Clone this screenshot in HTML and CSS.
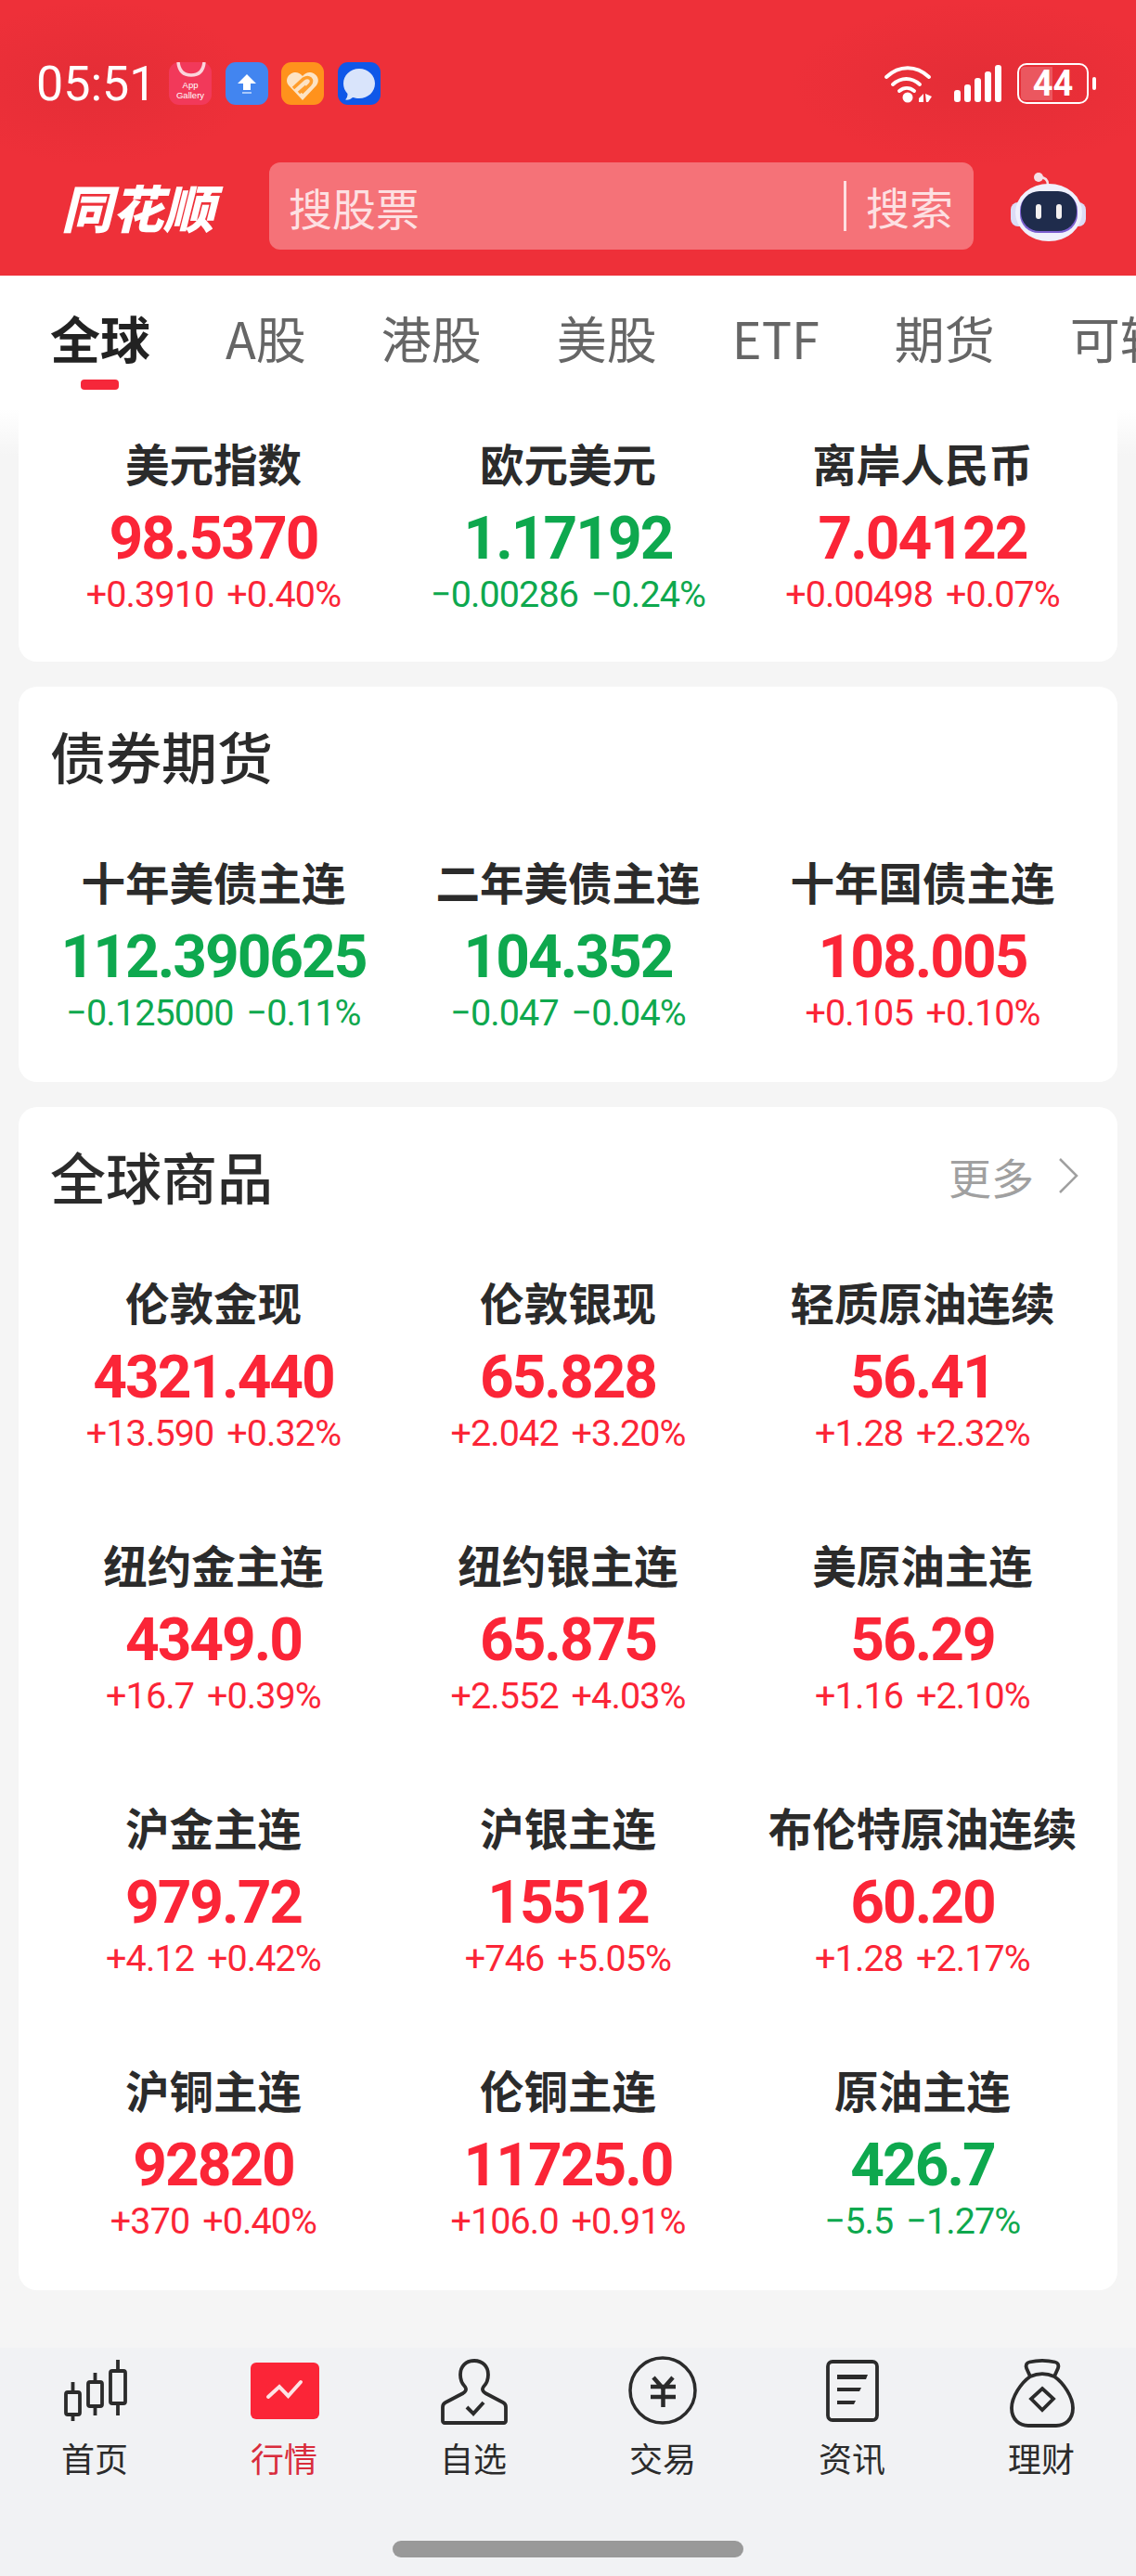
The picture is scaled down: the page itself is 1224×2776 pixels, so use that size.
FILE: index.html
```html
<!DOCTYPE html>
<html lang="zh-CN">
<head>
    <meta charset="UTF-8">
    <meta name="viewport" content="width=device-width, initial-scale=1.0">
    <title>行情</title>
    <link rel="stylesheet" href="styles.css">
</head>
<body>
    <header class="top">
        <div class="status">
            <div class="status-left">
                <span class="clock">05:51</span>
                <svg class="app-icon" viewBox="0 0 46 46"><rect width="46" height="46" rx="11" fill="#f2395a"/><path d="M10 0c1 10 6 14 14 14S37 10 38 0" fill="none" stroke="#fbd5dc" stroke-width="3.500"/><text x="23" y="28" class="gallery">App</text><text x="23" y="39" class="gallery">Gallery</text></svg>
                <svg class="app-icon" viewBox="0 0 46 46"><rect width="46" height="46" rx="11" fill="#4285f0"/><path d="M23 13l10 10h-6v7h-8v-7h-6z" fill="#fff"/><rect x="18" y="32" width="10" height="2" fill="#a9c8fa"/></svg>
                <svg class="app-icon" viewBox="0 0 46 46"><rect width="46" height="46" rx="11" fill="#ff921c"/><path d="M23 41L8 25c-7-9 7-20 15-10 8-10 22 1 15 10z" fill="#fde3c4"/><path d="M13 28l11-10c6-4 11 1 7 6l-9 9M19 33l8-7" fill="none" stroke="#ff9d2c" stroke-width="3.500"/></svg>
                <svg class="app-icon" viewBox="0 0 46 46"><rect width="46" height="46" rx="11" fill="#0f57e8"/><path d="M23 7c9.500 0 17 7 17 16s-7.500 16-17 16c-2.500 0-5-.5-7-1-2 2-5 3-8 2.500 2-2 2.500-4 2.500-6.500C7.500 31 6 27 6 23 6 14 13.500 7 23 7z" fill="#d9e4fb"/></svg>
            </div>
            <div class="status-right">
                <svg class="wifi" viewBox="0 0 53 41"><g fill="none" stroke="#fff" stroke-width="4" stroke-linecap="round"><path d="M3 13C17 0 35 0 49 13"/><path d="M10 21c9-8 20-8 29 0"/><path d="M17 28c5-4 11-4 16 0"/></g><circle cx="26" cy="35" r="5.500" fill="#fff"/><path d="M38 36l5-5v9h-5zM45 31l1 9h2l4-6z" fill="#fff"/></svg>
                <svg class="signal" viewBox="0 0 51 40"><g fill="#fff"><rect y="27" width="7" height="13" rx="3"/><rect x="11" y="21" width="7" height="19" rx="3"/><rect x="22" y="14" width="7" height="26" rx="3"/><rect x="33" y="7" width="7" height="33" rx="3"/><rect x="44" y="0" width="7" height="40" rx="3"/></g></svg>
                <div class="battery">
                    <div class="battery-body"><span class="battery-fill"></span><span class="battery-num">44</span></div>
                    <span class="battery-tip"></span>
                </div>
            </div>
        </div>
        <div class="search-row">
            <div class="logo">同花顺</div>
            <div class="search">
                <span class="search-hint">搜股票</span>
                <span class="search-btn">搜索</span>
            </div>
            <svg class="robot" viewBox="0 0 81 74">
                <circle cx="30" cy="5" r="5" fill="#f5dfe6"/>
                <path d="M31 5c6 0 9 3 9 8" fill="none" stroke="#f5dfe6" stroke-width="2.500"/>
                <rect x="0" y="32" width="81" height="26" rx="8" fill="#dcdcf5"/>
                <ellipse cx="41" cy="43" rx="36" ry="31" fill="#f0f0fc"/>
                <rect x="10" y="21" width="62" height="44" rx="20" fill="#7c5fd0"/>
                <rect x="11" y="20" width="60" height="43" rx="20" fill="#1f2c4c"/>
                <rect x="27" y="34" width="6" height="16" rx="3" fill="#f4f0f0"/>
                <rect x="49" y="34" width="6" height="16" rx="3" fill="#f4f0f0"/>
            </svg>
        </div>
    </header>

    <nav class="tabs">
        <span class="tab active">全球</span>
        <span class="tab">A股</span>
        <span class="tab">港股</span>
        <span class="tab">美股</span>
        <span class="tab">ETF</span>
        <span class="tab">期货</span>
        <span class="tab">可转债</span>
    </nav>

    <main class="content">
        <section class="card card-cut">
            <div class="quote-grid">
                <div class="quote"><h3>美元指数</h3><p class="price up">98.5370</p><p class="change up">+0.3910 +0.40%</p></div>
                <div class="quote"><h3>欧元美元</h3><p class="price down">1.17192</p><p class="change down">−0.00286 −0.24%</p></div>
                <div class="quote"><h3>离岸人民币</h3><p class="price up">7.04122</p><p class="change up">+0.00498 +0.07%</p></div>
            </div>
        </section>

        <section class="card">
            <div class="card-head"><h2>债券期货</h2></div>
            <div class="quote-grid">
                <div class="quote"><h3>十年美债主连</h3><p class="price down">112.390625</p><p class="change down">−0.125000 −0.11%</p></div>
                <div class="quote"><h3>二年美债主连</h3><p class="price down">104.352</p><p class="change down">−0.047 −0.04%</p></div>
                <div class="quote"><h3>十年国债主连</h3><p class="price up">108.005</p><p class="change up">+0.105 +0.10%</p></div>
            </div>
        </section>

        <section class="card">
            <div class="card-head">
                <h2>全球商品</h2>
                <span class="more">更多<svg class="chevron" viewBox="0 0 22 38"><path d="M2 1l18 18L2 37" fill="none" stroke="#a0a0a0" stroke-width="2.500"/></svg></span>
            </div>
            <div class="quote-grid">
                <div class="quote"><h3>伦敦金现</h3><p class="price up">4321.440</p><p class="change up">+13.590 +0.32%</p></div>
                <div class="quote"><h3>伦敦银现</h3><p class="price up">65.828</p><p class="change up">+2.042 +3.20%</p></div>
                <div class="quote"><h3>轻质原油连续</h3><p class="price up">56.41</p><p class="change up">+1.28 +2.32%</p></div>
                <div class="quote"><h3>纽约金主连</h3><p class="price up">4349.0</p><p class="change up">+16.7 +0.39%</p></div>
                <div class="quote"><h3>纽约银主连</h3><p class="price up">65.875</p><p class="change up">+2.552 +4.03%</p></div>
                <div class="quote"><h3>美原油主连</h3><p class="price up">56.29</p><p class="change up">+1.16 +2.10%</p></div>
                <div class="quote"><h3>沪金主连</h3><p class="price up">979.72</p><p class="change up">+4.12 +0.42%</p></div>
                <div class="quote"><h3>沪银主连</h3><p class="price up">15512</p><p class="change up">+746 +5.05%</p></div>
                <div class="quote"><h3>布伦特原油连续</h3><p class="price up">60.20</p><p class="change up">+1.28 +2.17%</p></div>
                <div class="quote"><h3>沪铜主连</h3><p class="price up">92820</p><p class="change up">+370 +0.40%</p></div>
                <div class="quote"><h3>伦铜主连</h3><p class="price up">11725.0</p><p class="change up">+106.0 +0.91%</p></div>
                <div class="quote"><h3>原油主连</h3><p class="price down">426.7</p><p class="change down">−5.5 −1.27%</p></div>
            </div>
        </section>
    </main>

    <footer class="bottom">
        <div class="nav-items">
            <a class="nav-item">
                <svg viewBox="0 0 80 80"><g fill="none" stroke="#2b2b2b" stroke-width="3.800"><rect x="9" y="42" width="15" height="24" rx="2"/><path d="M16.500 31v11M16.500 66v7"/><rect x="33" y="31" width="15" height="26" rx="2"/><path d="M40.500 21v10M40.500 57v10"/><rect x="57" y="19" width="16" height="35" rx="2"/><path d="M65 7v12M65 54v13"/></g></svg>
                <span>首页</span>
            </a>
            <a class="nav-item active">
                <svg viewBox="0 0 80 80"><rect x="4" y="10" width="74" height="61" rx="6" fill="#fb2537"/><path d="M23 47l12-11 9.500 10L58 31" fill="none" stroke="#fde3e5" stroke-width="4" stroke-linecap="round"/></svg>
                <span>行情</span>
            </a>
            <a class="nav-item">
                <svg viewBox="0 0 80 80"><path d="M41 8c-9 0-15 6-15 15 0 6 2 10 5 13 2 3 1 5-2 7L10 53c-2 1-3 3-3 5v15c0 1 1 2 2 2h64c1 0 2-1 2-2V58c0-2-1-4-3-5L53 43c-3-2-4-4-2-7 3-3 5-7 5-13 0-9-6-15-15-15z" fill="none" stroke="#2b2b2b" stroke-width="3.800"/><path d="M33 58l7 7 11-12" fill="none" stroke="#2b2b2b" stroke-width="4"/></svg>
                <span>自选</span>
            </a>
            <a class="nav-item">
                <svg viewBox="0 0 80 80"><circle cx="40" cy="40" r="35" fill="none" stroke="#2b2b2b" stroke-width="3.500"/><path d="M30 26l10.500 12L51 26M27 36h27M27 47h27M40.500 38v20" fill="none" stroke="#2b2b2b" stroke-width="4.500"/></svg>
                <span>交易</span>
            </a>
            <a class="nav-item">
                <svg viewBox="0 0 80 80"><rect x="14" y="9" width="53" height="63" rx="5" fill="none" stroke="#2b2b2b" stroke-width="3.800"/><path d="M24 23h33l-2 5H24zM24 37h26l-2 4H24zM24 51h20l-2 4H24z" fill="#2b2b2b"/></svg>
                <span>资讯</span>
            </a>
            <a class="nav-item">
                <svg viewBox="0 0 80 80"><path d="M28 25l-4-9c-1-3 0-6 3-6.500 9-2 19-2 28 0 3 .5 4 3.500 3 6.500l-4 9" fill="none" stroke="#2b2b2b" stroke-width="3.800"/><path d="M28 25c9-4 17-4 26 0 10 7 20 22 20 34 0 13-9 19-18 19H26c-9 0-18-6-18-19 0-12 10-27 20-34z" fill="none" stroke="#2b2b2b" stroke-width="3.800"/><path d="M41 38l12 11-12 12-12-12z" fill="none" stroke="#2b2b2b" stroke-width="3.800"/></svg>
                <span>理财</span>
            </a>
        </div>
        <div class="home-bar"></div>
    </footer>
</body>
</html>
```

FILE: styles.css
```css
* {
    box-sizing: border-box;
}
html, body {
    margin: 0;
    padding: 0;
}
body {
    width: 1224px;
    height: 2776px;
    overflow: hidden;
    display: flex;
    flex-direction: column;
    background-color: #f5f5f5;
    color: #2b2b2b;
    font-family: "Noto Sans CJK SC", "Noto Sans", sans-serif;
}
h2, h3, p {
    margin: 0;
    font-weight: normal;
}

/* red header */
.top {
    height: 297px;
    background-color: #ee3039;
    background-image:
        radial-gradient(ellipse 170px 90px at 105px 90px, rgba(190, 35, 45, 0.22), transparent),
        radial-gradient(ellipse 210px 90px at 1060px 90px, rgba(190, 35, 45, 0.22), transparent);
    color: white;
    flex-shrink: 0;
}
.status {
    height: 175px;
    padding: 67px 43px 0 39px;
    display: flex;
    justify-content: space-between;
}
.status-left, .status-right {
    display: flex;
    height: 46px;
    align-items: center;
}
.clock {
    font-family: Roboto, sans-serif;
    font-size: 52px;
    width: 143px;
    flex-shrink: 0;
}
.app-icon {
    width: 46px;
    height: 46px;
    margin-right: 14.600px;
}
.gallery {
    fill: white;
    font-size: 9.500px;
    text-anchor: middle;
    font-family: "Liberation Sans", sans-serif;
}
.wifi {
    width: 53px;
    height: 41px;
    margin-right: 23px;
}
.signal {
    width: 51px;
    height: 40px;
    margin-right: 17px;
}
.battery {
    display: flex;
    align-items: center;
}
.battery-body {
    position: relative;
    width: 77px;
    height: 44px;
    border: 2.500px solid white;
    border-radius: 10px;
    display: flex;
    align-items: center;
    justify-content: center;
    overflow: hidden;
}
.battery-fill {
    position: absolute;
    left: 2px;
    top: 2px;
    bottom: 2px;
    width: 34px;
    background-color: rgba(255, 255, 255, 0.2);
    border-radius: 4px 0 0 4px;
}
.battery-num {
    position: relative;
    font-family: Roboto, sans-serif;
    font-weight: 700;
    font-size: 38px;
    line-height: 1;
}
.battery-tip {
    width: 4px;
    height: 14px;
    margin-left: 4px;
    background-color: white;
    border-radius: 2px;
}
.search-row {
    display: flex;
    align-items: center;
    height: 94px;
    padding-left: 66px;
}
.logo {
    width: 224px;
    font-size: 55px;
    font-weight: 900;
    font-style: italic;
    line-height: 1;
    flex-shrink: 0;
}
.search {
    width: 759px;
    height: 94px;
    background-color: #f57278;
    border-radius: 12px;
    display: flex;
    align-items: center;
    justify-content: space-between;
    padding: 0 22px 0 21px;
    font-size: 47px;
    color: #fde0e2;
}
.search-btn {
    border-left: 3px solid #fde0e2;
    padding-left: 21px;
    line-height: 54px;
}
.robot {
    width: 81px;
    height: 74px;
    margin-left: 40px;
    margin-top: 2px;
}

/* tab strip */
.tabs {
    height: 144px;
    flex-shrink: 0;
    background: white;
    display: flex;
    gap: 81px;
    padding: 32px 0 0 54px;
    font-size: 54px;
    color: #666;
    white-space: nowrap;
    overflow: hidden;
}
.tab {
    position: relative;
    line-height: 70px;
    height: 70px;
}
.tab.active {
    color: #222;
    font-weight: 700;
}
.tab.active::after {
    content: "";
    position: absolute;
    left: 33px;
    top: 80px;
    width: 41px;
    height: 11px;
    border-radius: 4px;
    background-color: #f6273a;
}

/* cards */
.content {
    flex: 1;
    padding: 0 20px;
    display: flex;
    flex-direction: column;
    gap: 27px;
    overflow: hidden;
    background: linear-gradient(#fff, #f5f5f5 50px);
}
.card {
    background: white;
    border-radius: 20px;
    padding-bottom: 14px;
}
.card-cut {
    height: 272px;
    flex-shrink: 0;
    padding-top: 24px;
    border-radius: 0 0 20px 20px;
}
.card-head {
    display: flex;
    justify-content: space-between;
    align-items: center;
    height: 137px;
    padding: 10px 42px 0 34px;
}
.card-head h2 {
    font-size: 60px;
    font-weight: 500;
}
.more {
    display: flex;
    align-items: center;
    gap: 26px;
    font-size: 46px;
    color: #a0a0a0;
}
.chevron {
    width: 22px;
    height: 38px;
}
.quote-grid {
    display: grid;
    grid-template-columns: repeat(3, 1fr);
    row-gap: 47px;
    padding: 0 19px;
}
.card-head + .quote-grid {
    padding-top: 39px;
}
.quote {
    text-align: center;
    height: 236px;
}
.quote h3 {
    font-size: 47.500px;
    font-weight: 700;
    line-height: 68px;
    margin-bottom: 4px;
    white-space: nowrap;
}
.price {
    font-family: Roboto, sans-serif;
    font-weight: 700;
    font-size: 64px;
    line-height: 88px;
    letter-spacing: -2px;
}
.change {
    font-family: Roboto, sans-serif;
    font-size: 39.500px;
    line-height: 32px;
    letter-spacing: -0.900px;
    word-spacing: 5px;
}
.up {
    color: #fb2537;
}
.down {
    color: #0ea84e;
}

/* bottom navigation */
.bottom {
    height: 246px;
    flex-shrink: 0;
    background-color: #f1f2f4;
    position: relative;
}
.nav-items {
    display: grid;
    grid-template-columns: repeat(6, 1fr);
    padding-top: 6px;
}
.nav-item {
    display: flex;
    flex-direction: column;
    align-items: center;
    font-size: 36px;
    color: #2b2b2b;
}
.nav-item svg {
    width: 80px;
    height: 80px;
}
.nav-item span {
    line-height: 48px;
    margin-top: 8px;
}
.nav-item.active span {
    color: #d92c3c;
}
.home-bar {
    position: absolute;
    left: 423px;
    top: 208px;
    width: 378px;
    height: 18px;
    border-radius: 9px;
    background-color: #999;
}
```
